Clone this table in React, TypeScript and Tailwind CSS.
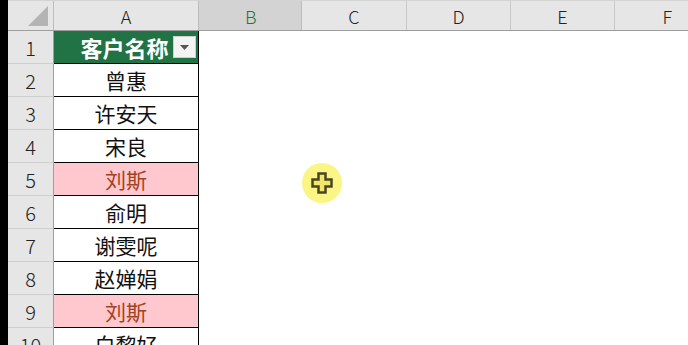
import React from "react";

const rows: { name: string; hl?: boolean }[] = [
  { name: "曾惠" },
  { name: "许安天" },
  { name: "宋良" },
  { name: "刘斯", hl: true },
  { name: "俞明" },
  { name: "谢雯呢" },
  { name: "赵婵娟" },
  { name: "刘斯", hl: true },
  { name: "白黎好" },
];

const font = { fontFamily: '"Noto Sans CJK SC", "Noto Sans", sans-serif' };

export default function App() {
  return (
    <div className="w-[688px] h-[345px] overflow-hidden bg-white flex relative" style={font}>
      <div className="w-[8px] h-full bg-black shrink-0" />
      <div className="flex flex-col flex-1">
        {/* column headers */}
        <div className="flex h-[31px] shrink-0 border-t border-[#d4d4d4] border-b border-b-[#9e9e9e] bg-[#e6e6e6] text-[18px] text-[#222] leading-none font-light">
          <div className="w-[46px] shrink-0 border-r border-[#bdbdbd] flex items-end justify-end pr-[5px] pb-[4px]">
            <svg width="20" height="20" viewBox="0 0 20 20">
              <polygon points="20,0 20,20 0,20" fill="#b4b4b4" />
            </svg>
          </div>
          <div className="w-[145px] shrink-0 border-r border-[#bdbdbd] flex items-center justify-center">A</div>
          <div className="w-[103px] shrink-0 border-r border-[#bdbdbd] bg-[#d3d3d3] text-[#217346] flex items-center justify-start pl-[46px]">B</div>
          <div className="w-[105px] shrink-0 border-r border-[#c8c8c8] flex items-center justify-center">C</div>
          <div className="w-[104px] shrink-0 border-r border-[#c8c8c8] flex items-center justify-center">D</div>
          <div className="w-[104px] shrink-0 border-r border-[#c8c8c8] flex items-center justify-center">E</div>
          <div className="flex-1 flex items-center justify-end pr-[16px]">F</div>
        </div>
        {/* row 1 */}
        <div className="flex h-[33px] shrink-0">
          <div className="w-[46px] shrink-0 bg-[#e6e6e6] border-r border-[#9e9e9e] border-b border-b-[#cfcfcf] flex items-center justify-center text-[20px] font-light text-[#222] pt-[2px]">1</div>
          <div className="w-[145px] shrink-0 bg-[#217346] border-r border-b border-black flex items-center pl-[22px] pr-[2px]">
            <span className="flex-1 text-center text-white font-bold text-[22px] leading-none">客户名称</span>
            <div className="w-[23px] h-[22px] bg-[#f3f3f3] border border-[#cfcfcf] flex items-center justify-center">
              <svg width="9" height="5" viewBox="0 0 9 5">
                <polygon points="0,0 9,0 4.5,5" fill="#555" />
              </svg>
            </div>
          </div>
          <div className="flex-1" />
        </div>
        {rows.map((r, i) => (
          <div key={i} className="flex h-[33px] shrink-0">
            <div className="w-[46px] shrink-0 bg-[#e6e6e6] border-r border-[#9e9e9e] border-b border-b-[#cfcfcf] flex items-center justify-center text-[20px] font-light text-[#222] pt-[2px]">
              {i + 2}
            </div>
            <div
              className={
                "w-[145px] shrink-0 border-r border-b border-black flex items-center justify-center text-[21px] leading-none " +
                (r.hl ? "bg-[#ffc7ce] text-[#a3421f]" : "bg-white text-[#111]")
              }
            >
              {r.name}
            </div>
            <div className="flex-1" />
          </div>
        ))}
      </div>
      {/* cursor highlight */}
      <div className="absolute left-[302px] top-[163px] w-[40px] h-[40px] rounded-full bg-[#fbf57a] opacity-90 flex items-center justify-center">
        <svg width="24" height="24" viewBox="0 0 24 24">
          <path
            d="M8.5 2.5 H15.5 V8.5 H21.5 V15.5 H15.5 V21.5 H8.5 V15.5 H2.5 V8.5 H8.5 Z"
            fill="#f1e55c"
            stroke="#34330c"
            strokeWidth="2.5"
            strokeLinejoin="miter"
          />
        </svg>
      </div>
    </div>
  );
}
